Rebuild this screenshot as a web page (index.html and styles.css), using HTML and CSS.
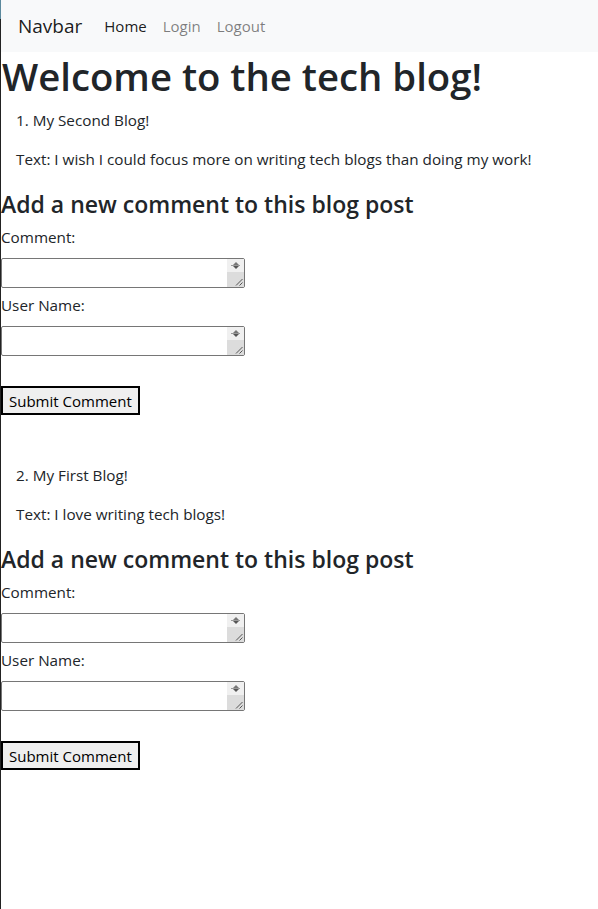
FILE: index.html
```html
<!DOCTYPE html>
<html lang="en">
<head>
<meta charset="utf-8">
<title>Tech Blog</title>
<link rel="stylesheet" href="styles.css">
</head>
<body>
<div class="edge"></div>
<nav class="navbar">
  <a class="brand" href="#">Navbar</a>
  <ul class="nav">
    <li><a class="nav-link active" href="#">Home</a></li>
    <li><a class="nav-link" href="#">Login</a></li>
    <li><a class="nav-link" href="#">Logout</a></li>
  </ul>
</nav>
<main class="page">
  <h1 class="title">Welcome to the tech blog!</h1>

  <section class="post">
    <div class="post-body">
      <p class="post-title">1. My Second Blog!</p>
      <p class="post-text">Text: I wish I could focus more on writing tech blogs than doing my work!</p>
    </div>
    <h4 class="comment-heading">Add a new comment to this blog post</h4>
    <form class="comment-form">
      <label class="field-label">Comment:</label>
      <span class="ta-wrap"><textarea class="ta" rows="1"></textarea><span class="sb"><span class="sb-top"><span class="arr-up"></span><span class="arr-line"></span><span class="arr-down"></span></span><span class="sb-bot"><svg width="8" height="8" viewBox="0 0 8 8"><path d="M1 7.5L7.5 1M4.5 7.5L7.5 4.5" stroke="#555" stroke-width="1" fill="none"/></svg></span></span></span>
      <label class="field-label">User Name:</label>
      <span class="ta-wrap"><textarea class="ta" rows="1"></textarea><span class="sb"><span class="sb-top"><span class="arr-up"></span><span class="arr-line"></span><span class="arr-down"></span></span><span class="sb-bot"><svg width="8" height="8" viewBox="0 0 8 8"><path d="M1 7.5L7.5 1M4.5 7.5L7.5 4.5" stroke="#555" stroke-width="1" fill="none"/></svg></span></span></span>
      <div class="btn-row"><button class="submit" type="button">Submit Comment</button></div>
    </form>
  </section>

  <section class="post">
    <div class="post-body">
      <p class="post-title">2. My First Blog!</p>
      <p class="post-text">Text: I love writing tech blogs!</p>
    </div>
    <h4 class="comment-heading">Add a new comment to this blog post</h4>
    <form class="comment-form">
      <label class="field-label">Comment:</label>
      <span class="ta-wrap"><textarea class="ta" rows="1"></textarea><span class="sb"><span class="sb-top"><span class="arr-up"></span><span class="arr-line"></span><span class="arr-down"></span></span><span class="sb-bot"><svg width="8" height="8" viewBox="0 0 8 8"><path d="M1 7.5L7.5 1M4.5 7.5L7.5 4.5" stroke="#555" stroke-width="1" fill="none"/></svg></span></span></span>
      <label class="field-label">User Name:</label>
      <span class="ta-wrap"><textarea class="ta" rows="1"></textarea><span class="sb"><span class="sb-top"><span class="arr-up"></span><span class="arr-line"></span><span class="arr-down"></span></span><span class="sb-bot"><svg width="8" height="8" viewBox="0 0 8 8"><path d="M1 7.5L7.5 1M4.5 7.5L7.5 4.5" stroke="#555" stroke-width="1" fill="none"/></svg></span></span></span>
      <div class="btn-row"><button class="submit" type="button">Submit Comment</button></div>
    </form>
  </section>
</main>
</body>
</html>
```
FILE: styles.css
```css
* { box-sizing: border-box; }
html, body { margin: 0; padding: 0; background: #fff; }
body {
  font-family: "Open Sans", "Noto Sans", sans-serif;
  font-size: 15.25px;
  line-height: 24px;
  color: #212529;
  padding-left: 1px;
}
.edge {
  position: fixed;
  left: 0; top: 0;
  width: 1px; height: 100%;
  background: linear-gradient(#5b899d 0 19px, #222 19px);
  z-index: 10;
}
.navbar {
  display: flex;
  align-items: center;
  height: 52px;
  padding: 0 16px 0 16px;
  background: #f8f9fa;
}
.brand {
  font-size: 19px;
  line-height: 30px;
  color: rgba(0,0,0,.9);
  text-decoration: none;
  margin-right: 14px;
  padding-left: 1px;
}
.nav {
  display: flex;
  list-style: none;
  margin: 0; padding: 0;
}
.nav-link {
  display: block;
  padding: 0 8px;
  font-size: 15px;
  color: rgba(0,0,0,.5);
  text-decoration: none;
}
.nav-link.active { color: rgba(0,0,0,.9); }
.page { display: block; }
.title {
  margin: 0 0 8px 0;
  font-size: 38.3px;
  line-height: 48px;
  font-weight: 600;
  padding-left: 1px;
}
.post-body { padding-left: 15px; }
.post-title { margin: 0 0 15px 0; }
.post-text { margin: 0 0 19px 0; }
.post + .post { margin-top: 48px; }
.comment-heading {
  margin: 0 0 6px 0;
  font-size: 23px;
  line-height: 29px;
  font-weight: 600;
}
.comment-form { display: flex; flex-direction: column; align-items: flex-start; }
.field-label { display: block; margin-bottom: 9px; }
.ta-wrap {
  position: relative;
  display: block;
  width: 244px;
  height: 30px;
}
.ta {
  display: block;
  width: 244px;
  height: 30px;
  margin: 0;
  border: 1px solid #767676;
  border-radius: 2px;
  resize: none;
  overflow: hidden;
  background: #fff;
  font: inherit;
}
.sb {
  position: absolute;
  right: 1px; top: 1px;
  width: 17px; height: 28px;
  display: flex;
  flex-direction: column;
}
.sb-top {
  height: 13px;
  background: #f0f0f0;
  display: flex;
  flex-direction: column;
  align-items: center;
  justify-content: center;
}
.arr-up { width: 0; height: 0; border-left: 3px solid transparent; border-right: 3px solid transparent; border-bottom: 3px solid #777; }
.arr-line { width: 9px; height: 1px; background: #999; }
.arr-down { width: 0; height: 0; border-left: 3px solid transparent; border-right: 3px solid transparent; border-top: 3px solid #555; }
.sb-bot {
  flex: 1;
  background: #dcdcdc;
  display: flex;
  align-items: flex-end;
  justify-content: flex-end;
  padding: 0 1px 1px 0;
}
.ta-wrap + .field-label { margin-top: 5px; }
.btn-row { padding-top: 30px; }
.submit {
  font: inherit;
  font-size: 15px;
  line-height: 20px;
  height: 29px;
  padding: 0 6px;
  background: #efefef;
  color: #000;
  border: 2px solid #000;
  border-radius: 0;
}
```
